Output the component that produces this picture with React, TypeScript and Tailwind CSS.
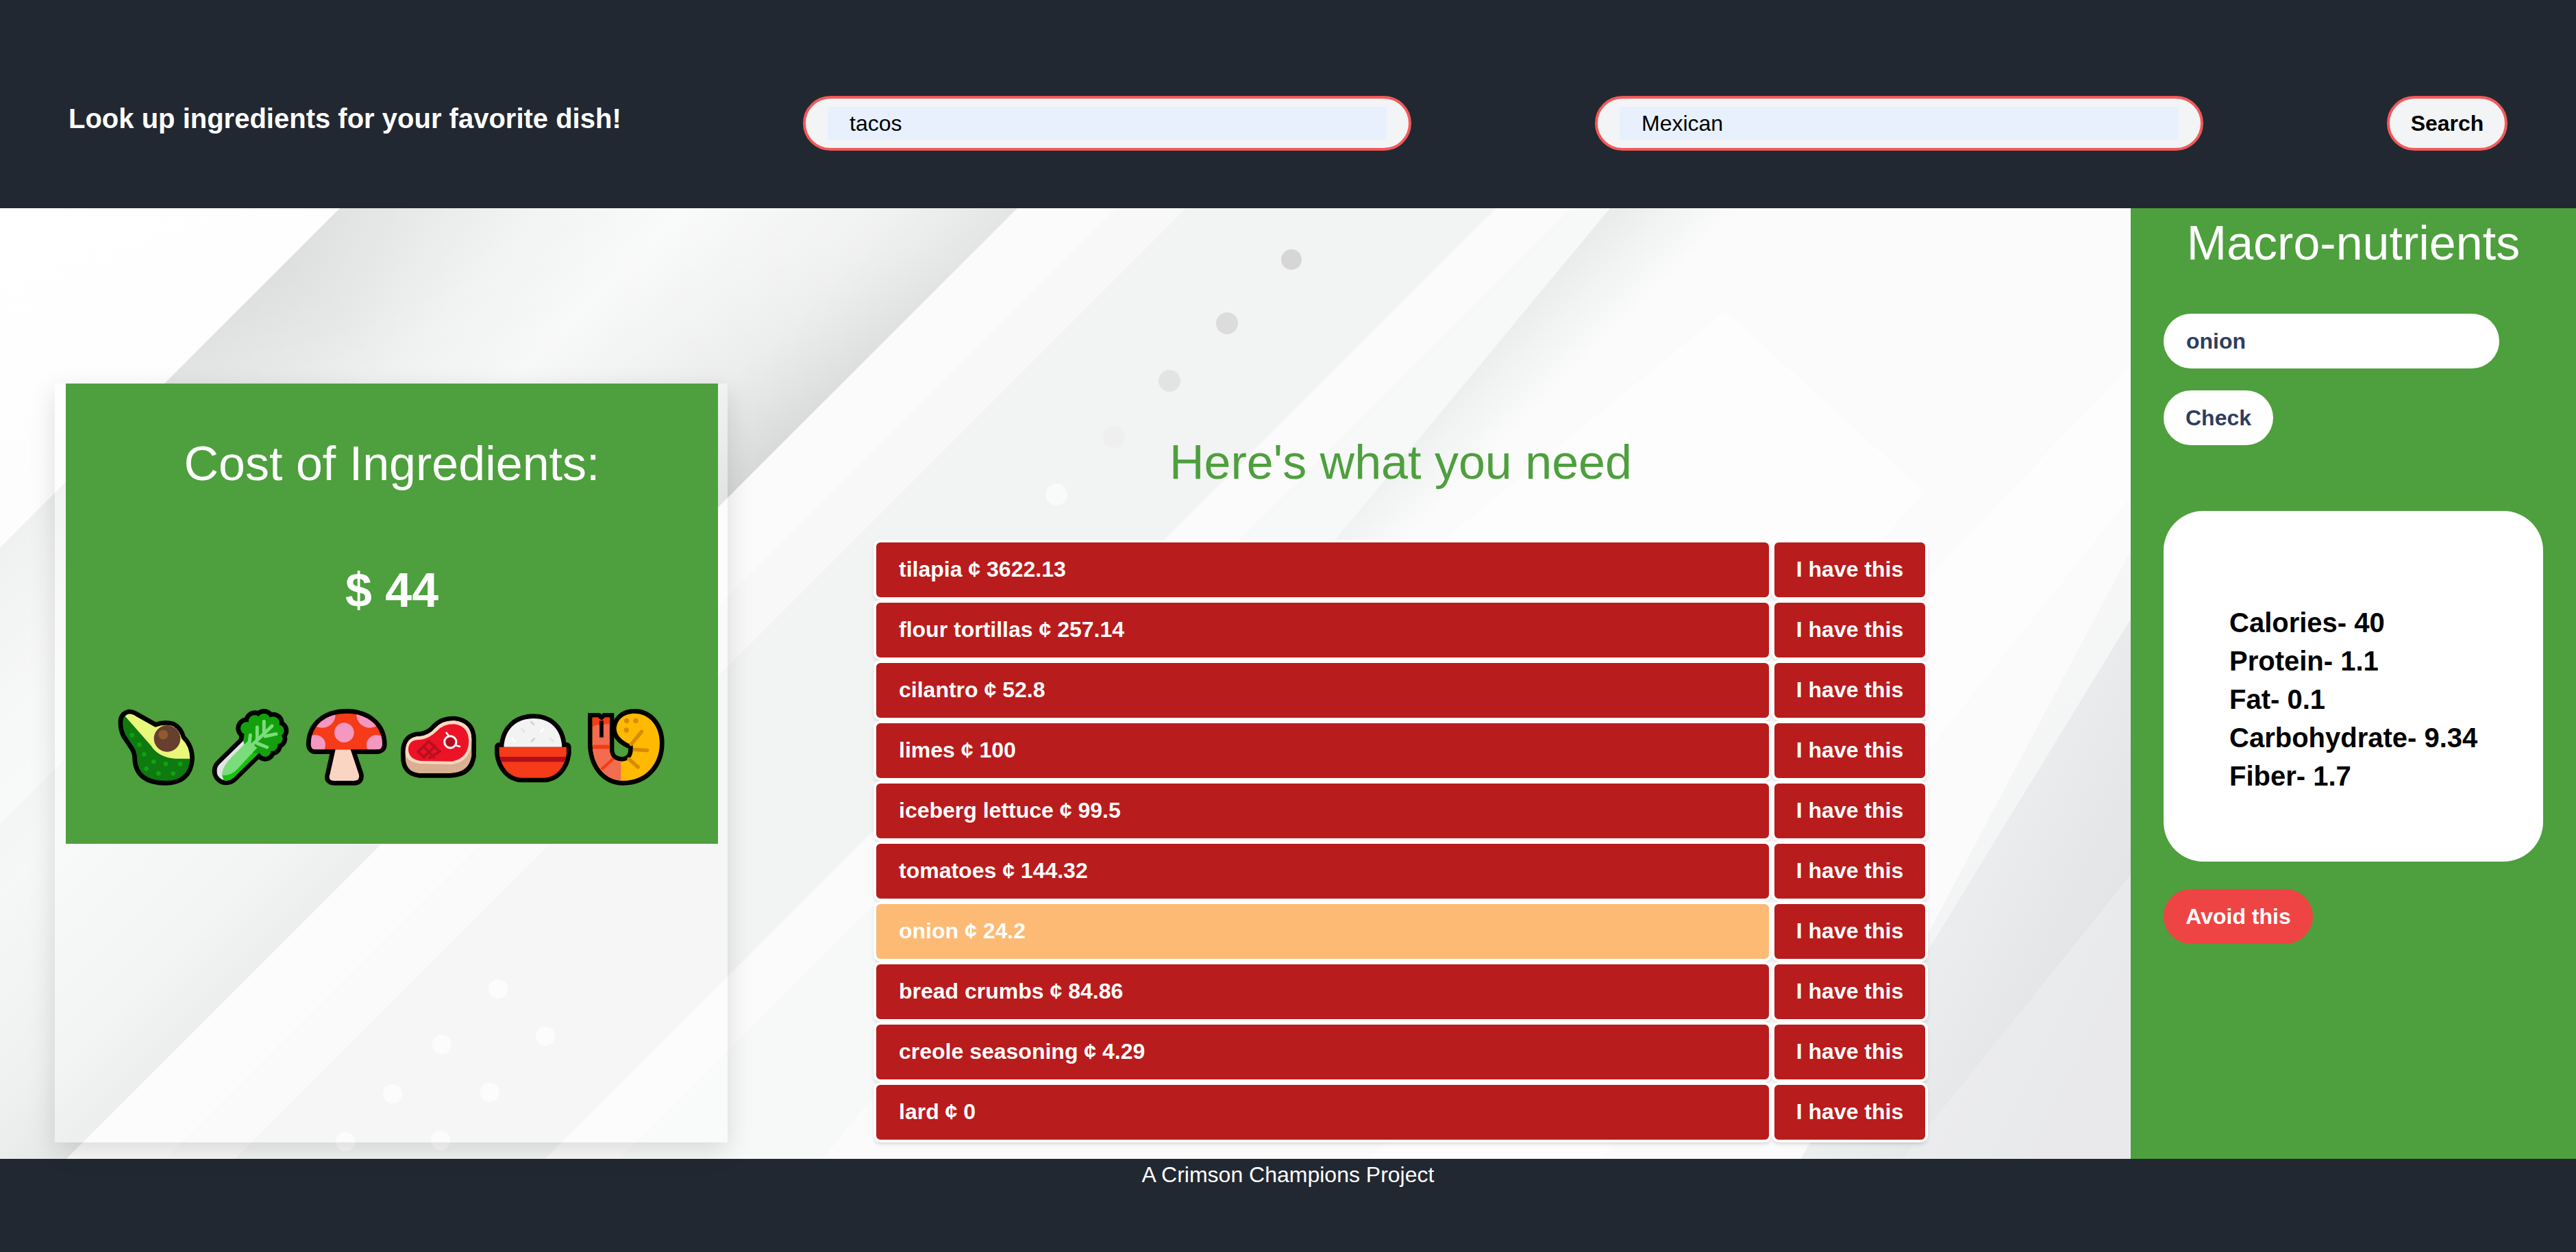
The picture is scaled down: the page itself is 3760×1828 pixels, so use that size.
import { ReactNode } from "react";

const ingredients = [
  { name: "tilapia ¢ 3622.13" },
  { name: "flour tortillas ¢ 257.14" },
  { name: "cilantro ¢ 52.8" },
  { name: "limes ¢ 100" },
  { name: "iceberg lettuce ¢ 99.5" },
  { name: "tomatoes ¢ 144.32" },
  { name: "onion ¢ 24.2", selected: true },
  { name: "bread crumbs ¢ 84.86" },
  { name: "creole seasoning ¢ 4.29" },
  { name: "lard ¢ 0" },
];

const macros = ["Calories- 40", "Protein- 1.1", "Fat- 0.1", "Carbohydrate- 9.34", "Fiber- 1.7"];

const Emoji = ({ children }: { children: ReactNode }) => (
  <svg viewBox="0 0 410 390" className="w-[136.67px] h-[130px] shrink-0">
    {children}
  </svg>
);

const Avocado = () => {
  const d = "M58 95 Q55 60 85 52 Q100 52 120 65 L200 110 Q240 95 275 105 Q305 120 315 160 Q352 195 352 250 Q345 345 245 345 Q125 345 120 250 Q120 215 100 190 L70 145 Q58 120 58 95 Z";
  return (
    <Emoji>
      <clipPath id="avo">
        <path d={d} />
      </clipPath>
      <path d={d} fill="#000" stroke="#000" strokeWidth="40" strokeLinejoin="round" />
      <path d={d} fill="#0f7a0f" />
      <path clipPath="url(#avo)" d="M68 62 L180 190 Q215 245 290 248 L360 248 L360 40 L60 40 Z" fill="#eaf77b" />
      <circle cx="252" cy="160" r="58" fill="#663f2f" />
      <circle cx="235" cy="143" r="21" fill="#8f5a32" />
      {[[98, 145], [130, 187], [151, 229], [193, 261], [246, 271], [309, 271], [161, 292], [214, 313], [278, 313]].map(([x, y]) => (
        <circle key={`${x}-${y}`} cx={x} cy={y} r="10" fill="#0ea30e" />
      ))}
    </Emoji>
  );
};

const leafBumps = [[190, 115, 28], [225, 85, 28], [265, 78, 28], [305, 92, 28], [328, 125, 25], [322, 160, 25], [300, 190, 25], [270, 215, 25], [235, 165, 60], [275, 135, 55]];

const Celery = () => (
  <Emoji>
    <clipPath id="stem">
      <circle cx="100" cy="302" r="42" />
      <polygon points="70,272 200,145 260,205 130,332" />
    </clipPath>
    <line x1="100" y1="302" x2="230" y2="175" stroke="#000" strokeWidth="124" strokeLinecap="round" />
    {leafBumps.map(([x, y, r]) => (
      <circle key={`o${x}-${y}`} cx={x} cy={y} r={r + 20} fill="#000" />
    ))}
    <g clipPath="url(#stem)">
      <rect x="40" y="130" width="240" height="230" fill="#e3e3e3" />
      <path d="M80 318 Q85 280 120 245 L195 170 L280 230 L170 345 L90 345 Z" fill="#7bdc7b" />
      <path d="M82 322 Q125 322 150 292 L225 205 L270 235 L170 345 L90 345 Z" fill="#16c10c" />
    </g>
    {leafBumps.map(([x, y, r]) => (
      <circle key={`i${x}-${y}`} cx={x} cy={y} r={r} fill="#14a00c" />
    ))}
    <path d="M185 215 L300 105 M265 85 L265 130 M235 110 L235 165 M205 145 L200 190 M270 150 L318 140 M238 182 L278 198" stroke="#7bdc7b" strokeWidth="15" strokeLinecap="round" fill="none" />
    <path d="M120 245 L195 170 L235 200 L150 292 Z" fill="#7bdc7b" />
  </Emoji>
);

const Mushroom = () => {
  const cap = "M62 185 C62 100 130 50 218 50 C305 50 375 100 375 185 Q375 208 350 208 L85 208 Q62 208 62 185 Z";
  const stem = "M170 208 L236 208 L272 315 Q280 345 250 345 L165 345 Q135 345 146 315 Z";
  return (
    <Emoji>
      <clipPath id="cap">
        <path d={cap} />
      </clipPath>
      <path d={stem} stroke="#000" strokeWidth="40" strokeLinejoin="round" />
      <path d={cap} stroke="#000" strokeWidth="40" strokeLinejoin="round" />
      <path d={stem} fill="#f9d5c2" />
      <path d={cap} fill="#f53b17" />
      <g clipPath="url(#cap)" fill="#f497c1">
        <circle cx="208" cy="134" r="43" />
        <circle cx="112" cy="55" r="58" />
        <circle cx="320" cy="55" r="58" />
        <circle cx="82" cy="188" r="44" />
        <circle cx="350" cy="188" r="44" />
      </g>
    </Emoji>
  );
};

const Meat = () => {
  const outer = "M65 220 Q65 150 130 150 Q170 145 195 115 Q225 80 280 82 Q355 90 355 165 L355 235 Q345 310 260 312 L125 312 Q65 305 65 240 Z";
  return (
    <Emoji>
      <path d={outer} stroke="#000" strokeWidth="40" strokeLinejoin="round" />
      <path d={outer} fill="#d9b092" />
      <path d="M65 220 Q65 150 130 150 Q170 145 195 115 Q225 80 280 82 Q355 90 355 165 Q355 260 270 272 L130 270 Q65 262 65 220 Z" fill="#fcd8c2" />
      <path d="M78 205 Q80 165 130 165 Q170 160 205 125 Q235 95 280 97 Q340 105 343 170 Q342 245 270 260 L130 258 Q78 250 78 205 Z" fill="#ec1327" />
      <path d="M120 218 L168 172 M145 242 L195 192 M170 244 L217 216 M168 172 L215 218 M145 195 L190 242 M122 218 L147 243" stroke="#b90f20" strokeWidth="11" strokeLinecap="round" />
      <circle cx="262" cy="175" r="20" fill="#b10d1e" />
      <circle cx="262" cy="175" r="26" fill="none" stroke="#fff" strokeWidth="9" />
      <path d="M245 135 L256 150 M285 190 L303 195" stroke="#fff" strokeWidth="8" strokeLinecap="round" />
    </Emoji>
  );
};

const Rice = () => {
  const dome = "M85 197 C90 110 150 72 215 72 C280 72 335 110 340 197 Z";
  const bowl = "M65 197 L360 197 L360 225 C352 290 310 332 260 332 L165 332 C115 332 73 290 65 225 Z";
  return (
    <Emoji>
      <clipPath id="bowl">
        <path d={bowl} />
      </clipPath>
      <path d={dome} stroke="#000" strokeWidth="40" strokeLinejoin="round" />
      <path d={bowl} stroke="#000" strokeWidth="40" strokeLinejoin="round" />
      <path d={dome} fill="#f3f3f3" />
      <path d={bowl} fill="#f53b17" />
      <rect x="60" y="240" width="305" height="22" fill="#b10d1e" clipPath="url(#bowl)" />
      <path d="M122 160 L133 172 M247 130 L260 117" stroke="#fff" strokeWidth="8" strokeLinecap="round" />
      <path d="M205 87 L216 98 M207 172 L219 160" stroke="#cfcfcf" strokeWidth="8" strokeLinecap="round" />
      <path d="M163 118 L175 130 M288 159 L300 171" stroke="#e3e3e3" strokeWidth="8" strokeLinecap="round" />
    </Emoji>
  );
};

const Shrimp = () => {
  const body = "M65 68 L90 68 L105 82 L120 68 L140 68 L140 205 Q140 258 195 260 Q248 258 242 190 Q175 165 170 120 C170 80 200 50 250 50 C310 50 360 100 360 180 C360 270 300 345 200 345 C130 345 70 290 65 190 Z";
  return (
    <Emoji>
      <clipPath id="shrimp">
        <path d={body} />
      </clipPath>
      <path d={body} stroke="#000" strokeWidth="40" strokeLinejoin="miter" strokeMiterlimit="3" />
      <path d={body} fill="#ffb900" />
      <g clipPath="url(#shrimp)">
        <polygon points="50,40 155,40 155,220 190,262 190,360 50,360" fill="#f26c50" />
        <path d="M50 40 L160 40 L160 110 Q130 85 105 105 Q85 90 60 115 L50 115 Z" fill="#f53b17" />
        <rect x="50" y="188" width="92" height="17" fill="#f53b17" />
        <path d="M105 295 L165 240" stroke="#f53b17" strokeWidth="13" />
      </g>
      <path d="M105 82 L105 155" stroke="#000" strokeWidth="17" />
      <circle cx="215" cy="82" r="11" fill="#d68b00" />
      <circle cx="255" cy="82" r="11" fill="#d68b00" />
      <circle cx="214" cy="123" r="11" fill="#d68b00" />
      <path d="M235 185 L280 130 M250 208 L305 212 M225 250 L265 285" stroke="#d68b00" strokeWidth="16" strokeLinecap="round" />
    </Emoji>
  );
};

const Backdrop = () => (
  <svg viewBox="0 0 3110 1388" className="absolute inset-0 w-full h-full">
    <defs>
      <linearGradient id="base" x1="0" y1="0" x2="1" y2="1">
        <stop offset="0" stopColor="#ffffff" />
        <stop offset="0.45" stopColor="#fafafa" />
        <stop offset="1" stopColor="#f1f2f3" />
      </linearGradient>
      <linearGradient id="edge1" gradientUnits="userSpaceOnUse" x1="248" y1="248" x2="620" y2="620">
        <stop offset="0" stopColor="#d4d6d6" />
        <stop offset="0.4" stopColor="#edeeee" />
        <stop offset="0.68" stopColor="#f6f7f7" />
      </linearGradient>
      <linearGradient id="edge2" gradientUnits="userSpaceOnUse" x1="500" y1="500" x2="742" y2="742">
        <stop offset="0" stopColor="#f6f7f7" />
        <stop offset="0.65" stopColor="#e8e9e9" />
        <stop offset="1" stopColor="#d5d7d7" />
      </linearGradient>
      <linearGradient id="fade" gradientUnits="userSpaceOnUse" x1="900" y1="0" x2="800" y2="700">
        <stop offset="0" stopColor="#ffffff" stopOpacity="0.35" />
        <stop offset="0.6" stopColor="#ffffff" stopOpacity="0" />
      </linearGradient>
      <linearGradient id="lowLeft" gradientUnits="userSpaceOnUse" x1="420" y1="80" x2="0" y2="500">
        <stop offset="0" stopColor="#ffffff" stopOpacity="0" />
        <stop offset="0.9" stopColor="#ffffff" stopOpacity="0.65" />
      </linearGradient>
      <linearGradient id="band3" gradientUnits="userSpaceOnUse" x1="1175" y1="1175" x2="1270" y2="1270">
        <stop offset="0" stopColor="#e9ebeb" />
        <stop offset="1" stopColor="#fbfbfb" />
      </linearGradient>
      <linearGradient id="gray4" gradientUnits="userSpaceOnUse" x1="2700" y1="900" x2="3110" y2="1100">
        <stop offset="0" stopColor="#f3f4f4" />
        <stop offset="1" stopColor="#e0e2e4" />
      </linearGradient>
    </defs>
    <rect width="3110" height="1388" fill="url(#base)" />
    {/* big diagonal bands */}
    <polygon points="496,0 1485,0 97,1388 -892,1388" fill="url(#edge1)" />
    <polygon points="1000,0 1485,0 0,1485 0,1000" fill="url(#edge2)" />
    <polygon points="496,0 1485,0 800,685 0,496" fill="url(#fade)" />
    <polygon points="496,0 700,200 0,900 0,496" fill="url(#lowLeft)" />
    <polygon points="0,700 350,470 1000,1388 0,1388" fill="#f6f7f7" opacity="0.5" />
    <polygon points="1485,0 1629,0 241,1388 97,1388" fill="#fbfbfb" />
    <polygon points="1629,0 1731,0 343,1388 241,1388" fill="#f8f8f8" />
    <polygon points="1731,0 2184,0 796,1388 343,1388" fill="#f2f3f3" />
    <polygon points="2184,0 2293,0 905,1388 796,1388" fill="#fbfbfb" />
    <polygon points="2293,0 2350,0 1200,1388 905,1388" fill="#f7f8f8" />
    <path d="M2350 0 L2545 0 Q2500 280 2240 530 L1500 1388 L1200 1388 Z" fill="url(#band3)" />
    <path d="M2545 0 L3110 0 L3110 500 L2640 1388 L1500 1388 L2240 530 Q2500 280 2545 0 Z" fill="#fbfbfb" />
    <polygon points="2518,150 2810,415 2520,730 2100,490" fill="#ffffff" opacity="0.45" />
    <polygon points="3110,600 3110,1388 2628,1388" fill="url(#gray4)" />
    <polygon points="3110,973 3110,1388 2777,1388" fill="#eeeff0" opacity="0.6" />
    <polygon points="2000,1388 2340,1388 3110,420 3110,230" fill="#ffffff" opacity="0.6" />
    <circle cx="1885" cy="75" r="15" fill="#d6d6d6" />
    <circle cx="1791" cy="168" r="16" fill="#dcdcdc" />
    <circle cx="1707" cy="252" r="16" fill="#e3e3e3" />
    <circle cx="1626" cy="334" r="16" fill="#efefef" />
    <circle cx="1542" cy="418" r="16" fill="#fafafa" />
    {[[727, 1140], [796, 1209], [645, 1221], [715, 1291], [573, 1293], [504, 1363], [643, 1361]].map(([x, y]) => (
      <circle key={`${x}-${y}`} cx={x} cy={y} r="14" fill="#fbfbfb" />
    ))}
  </svg>
);

const App = () => {
  return (
    <div className="flex flex-col w-[3760px] h-[1828px] font-['Liberation_Sans',Arial,sans-serif] overflow-hidden">
      <header className="flex items-center justify-between h-[304px] pt-14 px-[100px] bg-[#222831] shrink-0">
        <h1 className="w-[804px] mb-[14px] whitespace-nowrap text-[40px] font-bold text-white">Look up ingredients for your favorite dish!</h1>
        <div className="w-[888px] h-20 px-8 py-3 rounded-full border-4 border-[#f25a5a] bg-[#f3f4f6]">
          <input readOnly value="tacos" className="w-full h-12 px-8 bg-[#e8f0fe] text-[32px] text-black outline-none" />
        </div>
        <div className="w-[888px] h-20 px-8 py-3 rounded-full border-4 border-[#f25a5a] bg-[#f3f4f6]">
          <input readOnly value="Mexican" className="w-full h-12 px-8 bg-[#e8f0fe] text-[32px] text-black outline-none" />
        </div>
        <button className="w-[176px] h-20 rounded-full border-4 border-[#f25a5a] bg-[#f3f4f6] text-[32px] font-bold text-black">Search</button>
      </header>

      <main className="flex flex-1 min-h-0">
        <section className="relative flex items-end w-[3110px] pb-6 pl-20">
          <Backdrop />
          <div className="relative w-[982px] h-[1108px] pl-4 bg-white/30 shadow-[0_12px_36px_rgba(0,0,0,0.13)]">
            <div className="flex flex-col items-center w-[952px] h-[672px] pt-[74px] bg-[#4e9f3d] text-white">
              <h2 className="text-[70px] leading-[86px]">Cost of Ingredients:</h2>
              <p className="mt-[99px] text-[70px] leading-[86px] font-bold">$ 44</p>
              <div className="flex justify-center mt-[120px] mr-[4px]">
                <Avocado />
                <Celery />
                <Mushroom />
                <Meat />
                <Rice />
                <Shrimp />
              </div>
            </div>
          </div>

          <div className="relative flex flex-col w-[1539px] ml-[213px]">
            <h2 className="mb-[70px] text-center text-[70px] leading-[86px] text-[#4e9f3d]">Here's what you need</h2>
            {ingredients.map((item) => (
              <div key={item.name} className="flex h-[88px] text-[32px] font-bold text-white">
                <div className={`flex flex-1 items-center pl-[33px] pb-[2px] rounded-[10px] border-4 border-white shadow-md ${item.selected ? "bg-[#fdba74]" : "bg-[#b91c1c]"}`}>
                  {item.name}
                </div>
                <button className="w-[228px] pb-[2px] rounded-[10px] border-4 border-white bg-[#b91c1c] shadow-md">I have this</button>
              </div>
            ))}
          </div>
        </section>

        <aside className="flex flex-col items-start w-[650px] pl-12 bg-[#4e9f3d]">
          <h2 className="w-full -ml-6 mt-2 text-center text-[70px] leading-[86px] text-white">Macro-nutrients</h2>
          <input readOnly value="onion" className="w-[490px] h-20 mt-[60px] pl-[33px] rounded-full bg-white text-[32px] font-bold text-[#2d3e5f] outline-none" />
          <button className="w-[160px] h-20 mt-8 rounded-full bg-white text-[32px] font-bold text-[#2d3e5f]">Check</button>
          <div className="w-[554px] h-[512px] mt-24 pt-[135px] pl-[96px] rounded-[58px] bg-white text-[40px] leading-[56px] font-bold text-black">
            {macros.map((line) => (
              <p key={line}>{line}</p>
            ))}
          </div>
          <button className="w-[218px] h-20 mt-10 rounded-full bg-[#ef4444] text-[32px] font-bold text-white">Avoid this</button>
        </aside>
      </main>

      <footer className="h-[136px] shrink-0 bg-[#222831] text-center text-[32px] leading-[46px] text-white">A Crimson Champions Project</footer>
    </div>
  );
};

export default App;
